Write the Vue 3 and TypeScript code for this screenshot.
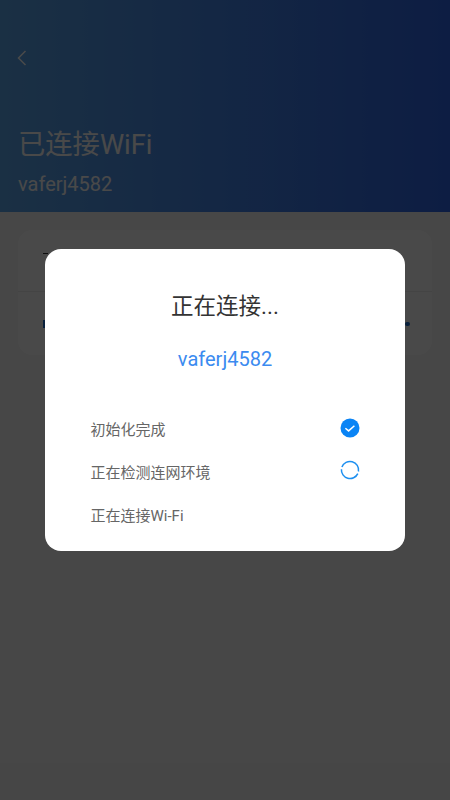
<script setup lang="ts">
const steps = [
  { label: '初始化完成', state: 'done' },
  { label: '正在检测连网环境', state: 'loading' },
  { label: '正在连接Wi-Fi', state: 'idle' },
]
</script>

<template>
  <div class="page">
    <header class="hero">
      <button class="back" aria-label="返回">
        <svg width="12" height="18" viewBox="0 0 12 18"><path d="M9.5 2 L2.5 9 L9.5 16" fill="none" stroke="#fff" stroke-width="1.5" /></svg>
      </button>
      <h1 class="hero-title">已连接WiFi</h1>
      <p class="hero-sub">vaferj4582</p>
    </header>
    <section class="card">
      <div class="card-top"><span class="top-mark"></span></div>
      <div class="card-bottom">
        <span class="blue-mark"></span>
        <span class="blue-dot"></span>
      </div>
    </section>
    <div class="mask">
      <div class="dialog">
        <h2 class="title">正在连接...</h2>
        <p class="ssid">vaferj4582</p>
        <ul class="steps">
          <li v-for="s in steps" :key="s.label" class="step">
            <span>{{ s.label }}</span>
            <svg v-if="s.state === 'done'" class="icon" width="20" height="20" viewBox="0 0 20 20">
              <circle cx="10" cy="10" r="9.5" fill="#0a84f5" />
              <path d="M5.4 10.2 L8.6 12.9 L14.4 7.8" fill="none" stroke="#fff" stroke-width="1.5" />
            </svg>
            <svg v-else-if="s.state === 'loading'" class="icon spinner" width="20" height="20" viewBox="0 0 20 20">
              <path d="M1.92 7.06 A8.6 8.6 0 0 1 18.47 11.5 M17.8 13.6 A8.6 8.6 0 0 1 1.43 9.25" fill="none" stroke="#1e90f0" stroke-width="1.5" />
            </svg>
          </li>
        </ul>
      </div>
    </div>
  </div>
</template>

<style>
html, body { margin: 0; }
</style>

<style scoped>
.page {
  position: relative;
  width: 450px;
  height: 800px;
  overflow: hidden;
  background: #f6f6f6;
  font-family: Roboto, "Noto Sans CJK SC", sans-serif;
}
.hero {
  height: 212px;
  box-sizing: border-box;
  padding: 49px 16px 0;
  background: linear-gradient(90deg, #5ca8ee, #2f66ea);
  color: #fff;
}
.back {
  display: block;
  padding: 0;
  border: 0;
  background: none;
  height: 18px;
}
.hero-title { margin: 60px 0 0 2px; font-size: 27.3px; line-height: 36px; font-weight: 400; }
.hero-sub { margin: 8px 0 0 2px; font-size: 20px; line-height: 26px; font-weight: 400; }
.card {
  margin: 18px 18px 0;
  height: 125px;
  border-radius: 14px;
  background: #fff;
}
.card-top { position: relative; height: 61px; border-bottom: 1px solid #ececec; }
.top-mark { position: absolute; left: 25px; top: 23px; width: 5px; height: 1px; background: #333; }
.card-bottom { position: relative; height: 63px; }
.blue-mark { position: absolute; left: 25px; top: 28px; width: 2px; height: 8px; background: #1e6fd0; }
.blue-dot { position: absolute; left: 387px; top: 30px; width: 5px; height: 4px; border-radius: 2px; background: #1e6fd0; }
.mask {
  position: absolute;
  inset: 0;
  background: rgba(0, 0, 0, 0.715);
}
.dialog {
  position: absolute;
  left: 45px;
  top: 249px;
  width: 360px;
  height: 302px;
  box-sizing: border-box;
  padding-top: 41px;
  border-radius: 16px;
  background: #fff;
}
.title { margin: 0; text-align: center; font-size: 22.5px; line-height: 32px; font-weight: 400; color: #333; }
.ssid { margin: 24px 0 0; text-align: center; font-size: 20px; line-height: 26px; color: #3b8bf0; }
.steps { margin: 35px 0 0; padding: 0 45px 0 45.5px; list-style: none; }
.step {
  display: flex;
  justify-content: space-between;
  align-items: center;
  height: 43px;
  font-size: 15px;
  color: #666;
}
.icon { display: block; margin-top: -1px; }
.spinner { margin-top: -4px; }
</style>
